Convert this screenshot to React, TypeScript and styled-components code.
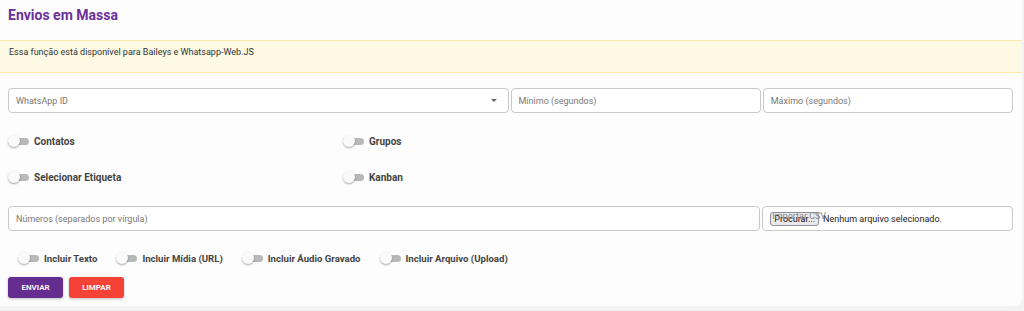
import React from 'react';
import styled, { createGlobalStyle } from 'styled-components';

const GlobalStyle = createGlobalStyle`
  body {
    margin: 0;
    background: #f3f3f3;
    font-family: Roboto, "Liberation Sans", Arial, sans-serif;
  }
`;

const Page = styled.div`
  padding: 0 2px 5px 0;
`;

const Card = styled.div`
  background: #fdfdfd;
  border-radius: 0 0 7px 0;
  padding: 0 9px 8px 8px;
  height: 306px;
  box-sizing: border-box;
`;

const Title = styled.h2`
  margin: 0;
  padding-top: 7px;
  height: 40px;
  box-sizing: border-box;
  font-size: 14px;
  font-weight: 700;
  color: #6b2f9c;
`;

const Alert = styled.div`
  margin: 0 -9px 0 -8px;
  height: 33px;
  box-sizing: border-box;
  background: #fdf9e3;
  border-top: 1px solid #fbe9a8;
  border-bottom: 1px solid #fbe9a8;
  padding: 6px 9px;
  font-size: 9px;
  color: #333;
`;

const FieldRow = styled.div<{ $cols: string; $top: number }>`
  display: grid;
  grid-template-columns: ${(p) => p.$cols};
  gap: 2px;
  margin-top: ${(p) => p.$top}px;
`;

const Field = styled.div`
  position: relative;
  height: 25px;
  box-sizing: border-box;
  border: 1px solid #c9c9c9;
  border-radius: 4px;
  display: flex;
  align-items: center;
  padding: 0 7px;
  font-size: 9px;
  color: #777;
  background: #fff;
`;

const Caret = styled.span`
  margin-left: auto;
  width: 0;
  height: 0;
  border-left: 3.5px solid transparent;
  border-right: 3.5px solid transparent;
  border-top: 3.5px solid #666;
  margin-right: 4px;
`;

const SwitchGrid = styled.div`
  display: grid;
  grid-template-columns: repeat(3, 1fr);
  row-gap: 16px;
  margin-top: 18px;
`;

const SwitchItem = styled.label<{ $size: number }>`
  display: flex;
  align-items: center;
  gap: 4px;
  height: 20px;
  font-size: ${(p) => p.$size}px;
  font-weight: 700;
  color: #444;
`;

const Track = styled.span`
  position: relative;
  width: 22px;
  height: 14px;
  flex: none;
  &::before {
    content: '';
    position: absolute;
    left: 4px;
    top: 3.5px;
    width: 17px;
    height: 7px;
    border-radius: 4px;
    background: #b8b8b8;
  }
  &::after {
    content: '';
    position: absolute;
    left: 0;
    top: 1px;
    width: 12px;
    height: 12px;
    border-radius: 50%;
    background: #fafafa;
    box-shadow: 0 1px 2px rgba(0, 0, 0, 0.35);
  }
`;

const FileField = styled(Field)`
  padding-left: 7px;
  color: #222;
`;

const FileButton = styled.span`
  border: 1px solid #8f8f9d;
  background: #e9e9ed;
  border-radius: 3px;
  padding: 1px 3px;
  font-size: 9px;
  color: #111;
  margin-right: 4px;
`;

const FileLabel = styled.span`
  position: absolute;
  left: 9px;
  top: 4px;
  font-size: 9px;
  color: #888;
`;

const IncludeRow = styled.div`
  display: flex;
  gap: 19px;
  padding-left: 10px;
  margin-top: 17px;
`;

const Actions = styled.div`
  display: flex;
  gap: 6px;
  margin-top: 9px;
`;

const Button = styled.button<{ $bg: string }>`
  height: 21px;
  width: 55px;
  border: none;
  border-radius: 3px;
  background: ${(p) => p.$bg};
  color: #fff;
  font-family: inherit;
  font-size: 8px;
  font-weight: 600;
  text-transform: uppercase;
  box-shadow: 0 1px 3px rgba(0, 0, 0, 0.25);
`;

const Switch = ({ label, size = 10 }: { label: string; size?: number }) => (
  <SwitchItem $size={size}>
    <Track />
    {label}
  </SwitchItem>
);

export default function App() {
  return (
    <Page>
      <GlobalStyle />
      <Card>
        <Title>Envios em Massa</Title>
        <Alert>Essa função está disponível para Baileys e Whatsapp-Web.JS</Alert>
        <FieldRow $cols="2fr 1fr 1fr" $top={15}>
          <Field>
            WhatsApp ID
            <Caret />
          </Field>
          <Field>Mínimo (segundos)</Field>
          <Field>Máximo (segundos)</Field>
        </FieldRow>
        <SwitchGrid>
          <Switch label="Contatos" />
          <Switch label="Grupos" />
          <div />
          <Switch label="Selecionar Etiqueta" />
          <Switch label="Kanban" />
          <div />
        </SwitchGrid>
        <FieldRow $cols="3fr 1fr" $top={19}>
          <Field>Números (separados por vírgula)</Field>
          <FileField>
            <FileButton>Procurar...</FileButton>
            Nenhum arquivo selecionado.
            <FileLabel>Importar CSV</FileLabel>
          </FileField>
        </FieldRow>
        <IncludeRow>
          <Switch label="Incluir Texto" size={9.6} />
          <Switch label="Incluir Mídia (URL)" size={9.6} />
          <Switch label="Incluir Áudio Gravado" size={9.6} />
          <Switch label="Incluir Arquivo (Upload)" size={9.6} />
        </IncludeRow>
        <Actions>
          <Button $bg="#662d91">Enviar</Button>
          <Button $bg="#f44336">Limpar</Button>
        </Actions>
      </Card>
    </Page>
  );
}
